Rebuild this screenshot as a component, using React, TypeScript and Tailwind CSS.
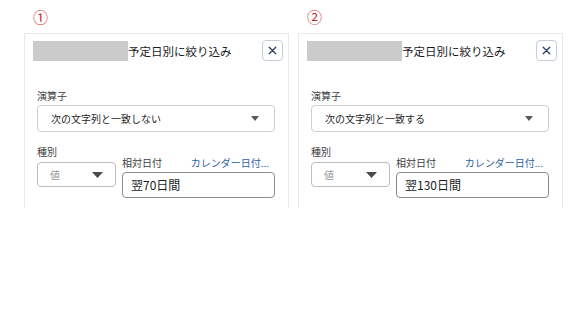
import React from 'react';

type PanelProps = {
  num: string;
  operator: string;
  value: string;
};

function CaretSmall() {
  return (
    <svg width="8" height="5" viewBox="0 0 8 5" className="shrink-0">
      <path d="M0 0 H8 L4 5 Z" fill="#5a5a5a" />
    </svg>
  );
}

function CaretLarge() {
  return (
    <svg width="11" height="6" viewBox="0 0 11 6" className="shrink-0">
      <path d="M0 0 H11 L5.5 6 Z" fill="#4a4a4a" />
    </svg>
  );
}

function FilterPanel({ num, operator, value }: PanelProps) {
  return (
    <div className="w-[265px] flex flex-col">
      {/* circled number */}
      <div className="ml-[9px] h-[18px] leading-[18px] mb-[7px] text-[15px] text-[#cc2a26]">{num}</div>

      <div className="h-[175px] border-t border-x border-[#e9e9e9] bg-white">
        {/* header */}
        <div className="flex items-center pt-[6px] pl-[8px] pr-[5px]">
          <div className="w-[95px] h-[20px] bg-[#cbcbcb]" />
          <div className="flex-1 text-[11.5px] text-[#1c1c1c] leading-[20px]">予定日別に絞り込み</div>
          <button className="w-[21px] h-[21px] rounded-[4px] border border-[#c5cfdc] flex items-center justify-center shadow-[0_0_1px_rgba(0,0,0,0.08)]">
            <svg width="9" height="9" viewBox="0 0 9 9">
              <path d="M1.2 1.2 L7.8 7.8 M7.8 1.2 L1.2 7.8" stroke="#2b3f66" strokeWidth="1.3" strokeLinecap="round" />
            </svg>
          </button>
        </div>

        {/* body */}
        <div className="pl-[12px] pr-[13px]">
          <div className="mt-[28px] text-[10px] leading-[14px] text-[#3e3e3e]">演算子</div>
          <div className="mt-[2px] h-[27px] rounded-[4px] border border-[#cfcfcf] flex items-center justify-between pl-[13px] pr-[15px]">
            <span className="text-[10px] text-[#1f1f1f]">{operator}</span>
            <CaretSmall />
          </div>

          <div className="mt-[13px] flex items-start gap-[6px]">
            <div className="w-[79px] shrink-0">
              <div className="text-[10px] leading-[14px] text-[#3e3e3e]">種別</div>
              <div className="mt-[3px] h-[25px] rounded-[4px] border border-[#bdbdbd] flex items-center justify-between pl-[12px] pr-[12px]">
                <span className="text-[10px] text-[#9a9a9a]">値</span>
                <CaretLarge />
              </div>
            </div>
            <div className="flex-1 mt-[11px]">
              <div className="flex items-center justify-between text-[10px] leading-[14px] pr-[6px]">
                <span className="text-[#3e3e3e]">相対日付</span>
                <span className="text-[#2e62a6]">カレンダー日付...</span>
              </div>
              <div className="mt-[2px] h-[26px] rounded-[4px] border border-[#8c8c8c] flex items-center pl-[8px]">
                <span className="text-[12px] text-[#1c1c1c]">{value}</span>
              </div>
            </div>
          </div>
        </div>
      </div>
    </div>
  );
}

export default function App() {
  return (
    <div
      className="w-[586px] h-[330px] bg-white flex gap-[9px] pl-[24px] pt-[8px]"
      style={{ fontFamily: '"Noto Sans CJK JP", "Noto Sans", sans-serif' }}
    >
      <FilterPanel num="①" operator="次の文字列と一致しない" value="翌70日間" />
      <FilterPanel num="②" operator="次の文字列と一致する" value="翌130日間" />
    </div>
  );
}
